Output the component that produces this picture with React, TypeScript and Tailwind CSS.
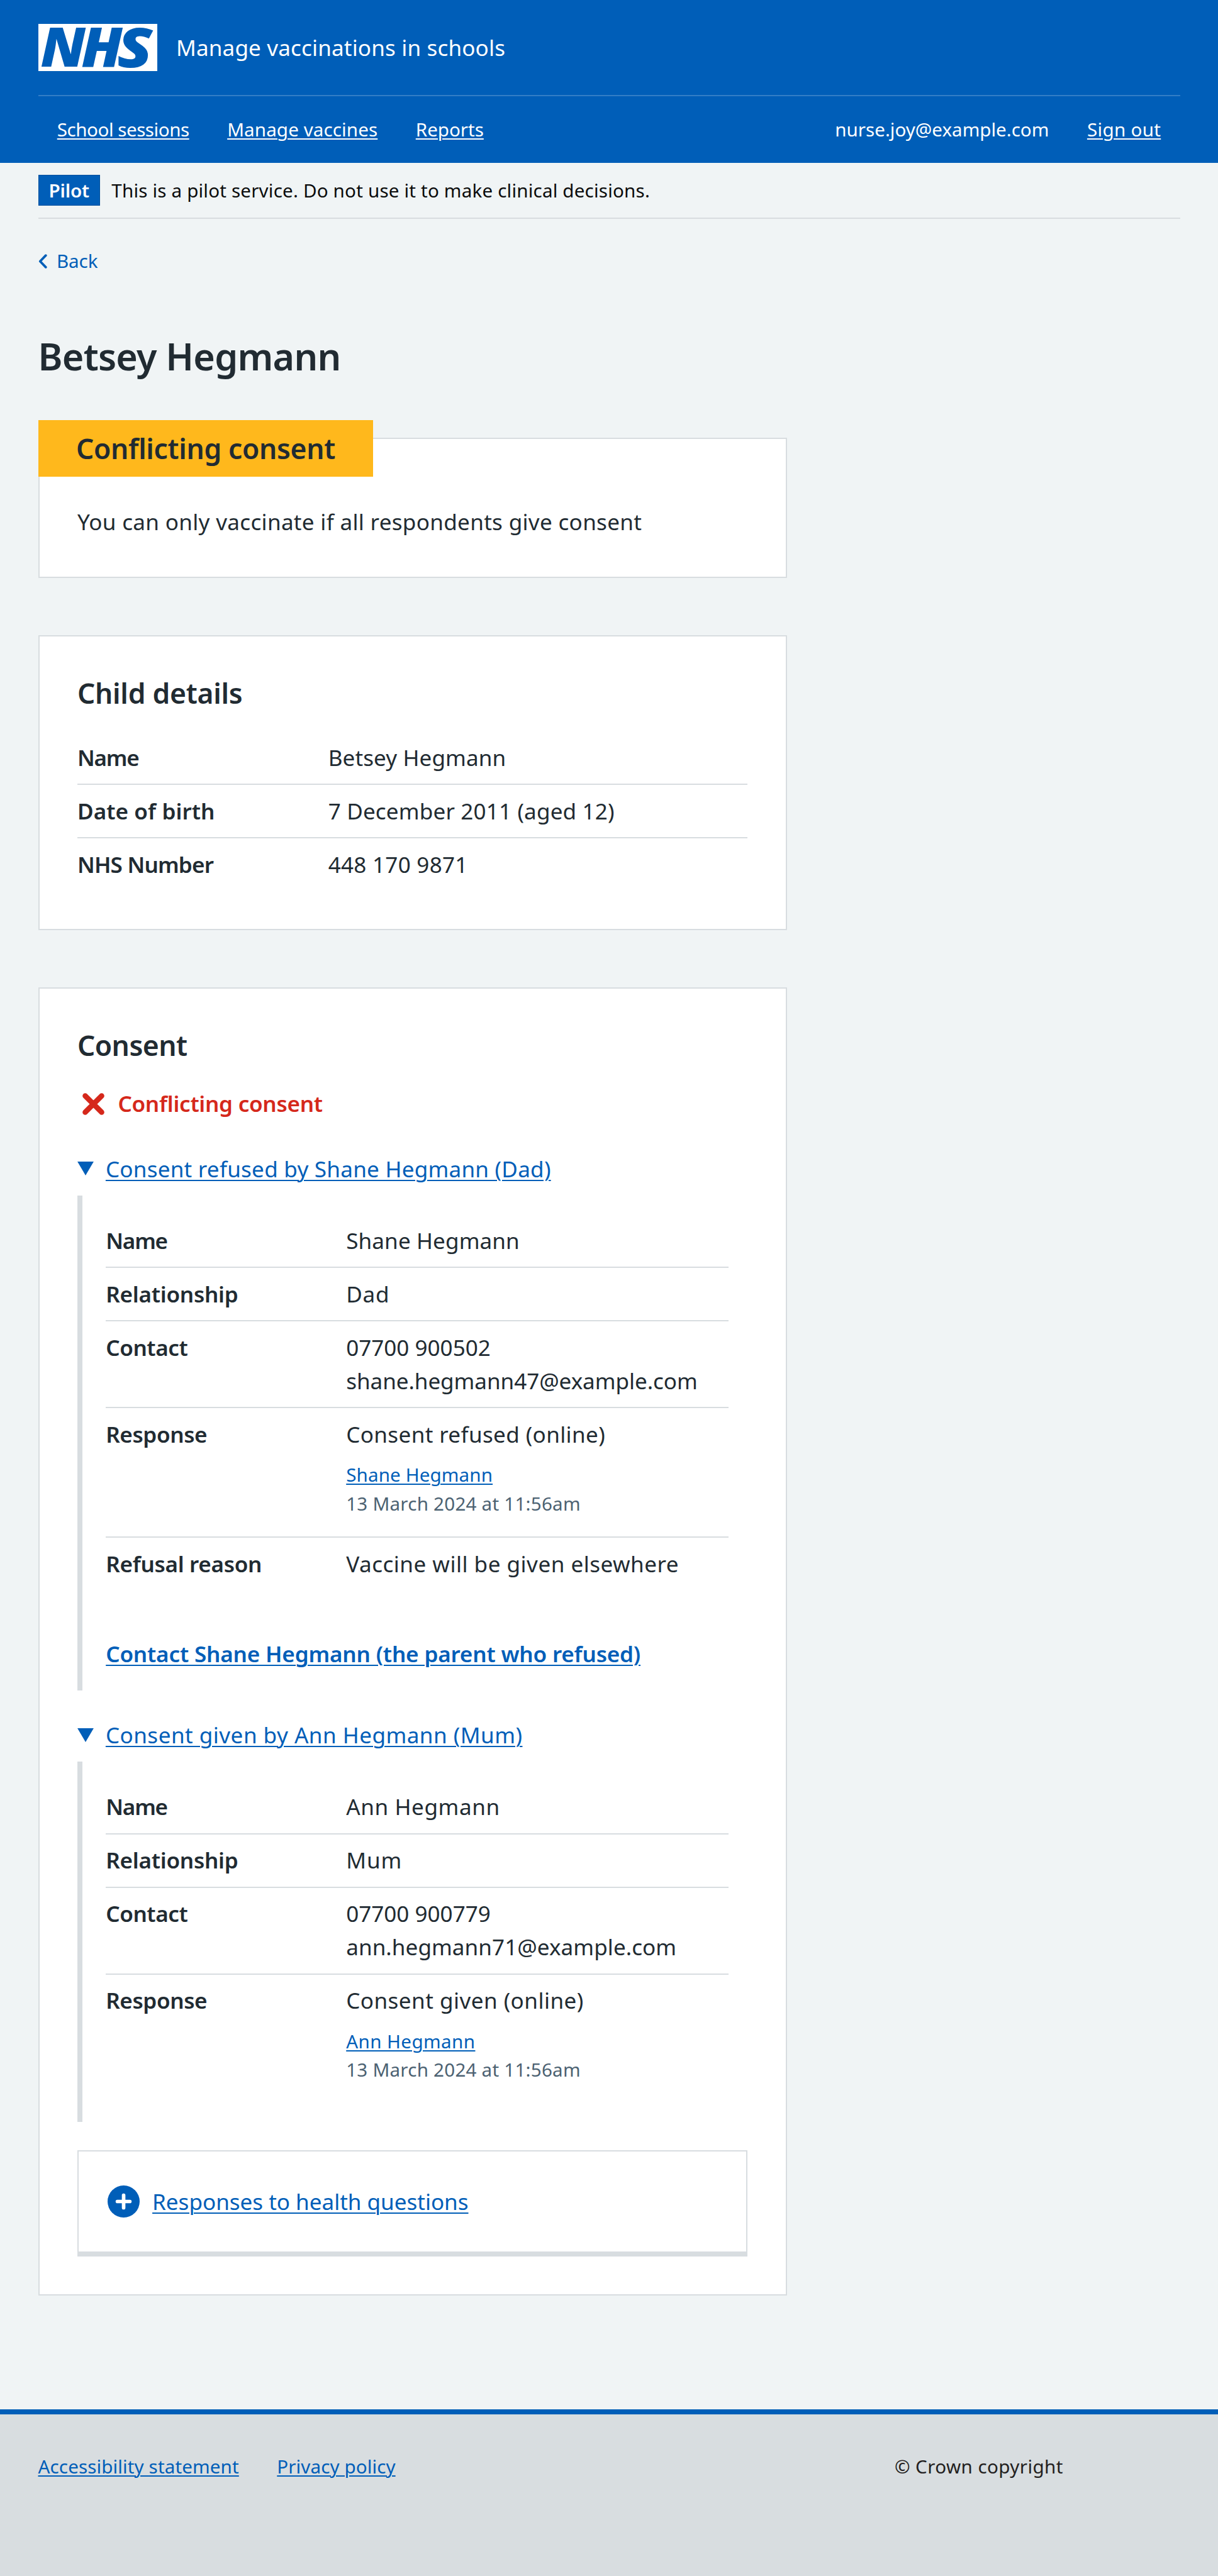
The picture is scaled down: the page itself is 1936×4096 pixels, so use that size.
import React from "react";

type Row = { label: string; labelClass: string; value: React.ReactNode };

const body = "block whitespace-nowrap text-[35.1px] leading-[52.94px]";
const small = "block whitespace-nowrap text-[29.6px] leading-[45.37px]";
const linkLg = "underline decoration-2 underline-offset-4";
const linkSm = "underline decoration-2 underline-offset-[3px]";

function NhsLogo() {
  return (
    <svg
      viewBox="0 0 200 80"
      fill="#005eb8"
      aria-label="NHS"
      className="h-[75.6px] w-[189px] bg-white font-['Open_Sans'] text-[91px] font-extrabold italic"
    >
      <text transform="translate(3.8 72.3) scale(1.052 1)">N</text>
      <text transform="translate(72.1 72.3) scale(1.065 1)">H</text>
      <text transform="translate(132.6 72.5) scale(1.19 1.02)">S</text>
    </svg>
  );
}

function Header() {
  return (
    <header className="h-[259px] bg-[#005eb8] px-[60.5px] text-white">
      <div className="flex h-[151px] items-center gap-[30.5px]">
        <NhsLogo />
        <span className="mb-px whitespace-nowrap text-[35.1px] leading-[53px] tracking-[0.14px]">
          Manage vaccinations in schools
        </span>
      </div>
      <nav className="flex h-[108px] items-center justify-between border-t-2 border-[#337ec6] px-[30.25px] pb-px text-[29.6px] leading-[45px]">
        <div className="flex gap-[60.5px] whitespace-nowrap">
          <a className={`${linkSm} tracking-[-0.48px]`}>School sessions</a>
          <a className={`${linkSm} tracking-[0.09px]`}>Manage vaccines</a>
          <a className={`${linkSm} tracking-[-0.03px]`}>Reports</a>
        </div>
        <div className="flex gap-[60.5px] whitespace-nowrap">
          <span className="tracking-[-0.02px]">nurse.joy@example.com</span>
          <a className={`${linkSm} tracking-[0.3px]`}>Sign out</a>
        </div>
      </nav>
    </header>
  );
}

function PilotBanner() {
  return (
    <div className="mx-[60.5px] flex h-[89px] items-center border-b-2 border-[#d8dde0] whitespace-nowrap text-[29.6px] leading-[45px]">
      <strong className="flex h-[49px] w-[98.3px] items-center justify-center border border-[#004f9c] bg-[#005eb8] font-semibold tracking-[-0.2px] text-white">
        Pilot
      </strong>
      <span className="ml-[18.5px] pb-px tracking-[0.18px] text-[#0b0c0c]">
        This is a pilot service. Do not use it to make clinical decisions.
      </span>
    </div>
  );
}

function SummaryList({ rows, columns }: { rows: Row[]; columns: string }) {
  return (
    <dl>
      {rows.map((row, i) => (
        <div
          key={row.label}
          className={`grid pt-[14.6px] pb-[15.6px] ${columns} ${i < rows.length - 1 ? "border-b-2 border-[#d8dde0]" : ""}`}
        >
          <dt className={`${body} font-semibold ${row.labelClass}`}>{row.label}</dt>
          <dd>{row.value}</dd>
        </div>
      ))}
    </dl>
  );
}

function Details({
  title,
  titleClass,
  className,
  panelClass,
  children,
}: {
  title: string;
  titleClass: string;
  className: string;
  panelClass: string;
  children: React.ReactNode;
}) {
  return (
    <section className={className}>
      <div className="flex items-center text-[#005eb8]">
        <svg viewBox="0 0 27 23" className="mr-[19px] h-[22px] w-[26px]">
          <path d="M0 0H27L13.5 23Z" fill="currentColor" />
        </svg>
        <a className={`${body} ${linkLg} ${titleClass}`}>{title}</a>
      </div>
      <div className={`mt-4 border-l-8 border-[#d8dde0] pt-[30.3px] pr-[30.2px] pl-[37.3px] ${panelClass}`}>
        {children}
      </div>
    </section>
  );
}

function Responder({
  text,
  textClass,
  name,
  nameClass,
}: {
  text: string;
  textClass: string;
  name: string;
  nameClass: string;
}) {
  return (
    <>
      <span className={`${body} ${textClass}`}>{text}</span>
      <a className={`${small} ${linkSm} mt-[15.4px] text-[#005eb8] ${nameClass}`}>{name}</a>
      <span className={`${small} mb-[14.5px] tracking-[0.23px] text-[#4c6272]`}>13 March 2024 at 11:56am</span>
    </>
  );
}

const childRows: Row[] = [
  {
    label: "Name",
    labelClass: "tracking-[-1.2px]",
    value: <span className={`${body} tracking-[0.09px]`}>Betsey Hegmann</span>,
  },
  {
    label: "Date of birth",
    labelClass: "tracking-[0.08px]",
    value: <span className={`${body} tracking-[0.15px]`}>7 December 2011 (aged 12)</span>,
  },
  {
    label: "NHS Number",
    labelClass: "tracking-[-0.81px]",
    value: <span className={`${body} tracking-[0.25px]`}>448 170 9871</span>,
  },
];

const refusedRows: Row[] = [
  {
    label: "Name",
    labelClass: "tracking-[-1.2px]",
    value: <span className={`${body} tracking-[0.1px]`}>Shane Hegmann</span>,
  },
  {
    label: "Relationship",
    labelClass: "tracking-[-0.25px]",
    value: <span className={`${body} tracking-[0.8px]`}>Dad</span>,
  },
  {
    label: "Contact",
    labelClass: "tracking-[-0.41px]",
    value: (
      <>
        <span className={`${body} tracking-[-0.02px]`}>07700 900502</span>
        <span className={`${body} tracking-[-0.07px]`}>shane.hegmann47@example.com</span>
      </>
    ),
  },
  {
    label: "Response",
    labelClass: "tracking-[-0.4px]",
    value: (
      <Responder
        text="Consent refused (online)"
        textClass="tracking-[0.36px]"
        name="Shane Hegmann"
        nameClass="tracking-[0.11px]"
      />
    ),
  },
  {
    label: "Refusal reason",
    labelClass: "tracking-[-0.3px]",
    value: <span className={`${body} tracking-[0.48px]`}>Vaccine will be given elsewhere</span>,
  },
];

const givenRows: Row[] = [
  {
    label: "Name",
    labelClass: "tracking-[-1.2px]",
    value: <span className={`${body} tracking-[0.59px]`}>Ann Hegmann</span>,
  },
  {
    label: "Relationship",
    labelClass: "tracking-[-0.25px]",
    value: <span className={`${body} tracking-[0.9px]`}>Mum</span>,
  },
  {
    label: "Contact",
    labelClass: "tracking-[-0.41px]",
    value: (
      <>
        <span className={`${body} tracking-[-0.02px]`}>07700 900779</span>
        <span className={`${body} tracking-[0.05px]`}>ann.hegmann71@example.com</span>
      </>
    ),
  },
  {
    label: "Response",
    labelClass: "tracking-[-0.4px]",
    value: (
      <Responder
        text="Consent given (online)"
        textClass="tracking-[0.45px]"
        name="Ann Hegmann"
        nameClass="tracking-[0.4px]"
      />
    ),
  },
];

export default function App() {
  return (
    <div className="flex h-[4096px] w-[1936px] flex-col overflow-hidden bg-[#f0f4f5] font-['Noto_Sans',sans-serif] text-[#212b32]">
      <Header />
      <PilotBanner />

      <main className="w-[1250.6px] flex-1 pl-[60.5px]">
        <a className="mt-[49.4px] flex h-9 items-center whitespace-nowrap text-[29.6px] leading-9 tracking-[-0.13px] text-[#005eb8]">
          <svg viewBox="0 0 15 24" className="mr-[15.5px] h-[23px] w-[14px]" fill="none">
            <path d="M12.6 2 3 12l9.6 10" stroke="currentColor" strokeWidth="4" strokeLinecap="round" strokeLinejoin="round" />
          </svg>
          Back
        </a>

        <h1 className="mt-[93px] text-[59.2px] leading-[80px] font-semibold tracking-[-0.75px]">Betsey Hegmann</h1>

        <section className="mt-[89.6px] h-[223px] border-2 border-[#d8dde0] bg-white">
          <h2 className="-mt-[30.3px] -ml-0.5 flex h-[90.7px] w-[532.2px] items-center bg-[#ffb81c] pl-[60.5px] text-[44.4px] font-semibold tracking-[-0.34px] whitespace-nowrap">
            Conflicting consent
          </h2>
          <p className={`${body} mt-[44.4px] pl-[60.4px] tracking-[0.3px]`}>
            You can only vaccinate if all respondents give consent
          </p>
        </section>

        <section className="mt-[90.8px] h-[469px] border-2 border-[#d8dde0] bg-white px-[60.4px] pt-[60.2px]">
          <h2 className="mb-[31.2px] text-[44.4px] leading-[60px] font-semibold tracking-[-0.25px]">Child details</h2>
          <SummaryList rows={childRows} columns="grid-cols-[398.8px_1fr]" />
        </section>

        <section className="mt-[90.8px] h-[2080.2px] border-2 border-[#d8dde0] bg-white px-[60.4px] pt-[60.4px]">
          <h2 className="text-[44.4px] leading-[60px] font-semibold tracking-[-0.51px]">Consent</h2>

          <p className="mt-9 flex items-center text-[#d5281b]">
            <svg viewBox="0 0 37 37" className="mt-0.5 mr-[21px] ml-[8.5px] h-[35px] w-[35px]" fill="none">
              <path d="M4.7 4.7 32.3 32.3M32.3 4.7 4.7 32.3" stroke="currentColor" strokeWidth="9" strokeLinecap="round" />
            </svg>
            <span className={`${body} font-semibold tracking-[-0.27px]`}>Conflicting consent</span>
          </p>

          <Details
            title="Consent refused by Shane Hegmann (Dad)"
            titleClass="tracking-[0.23px]"
            className="mt-[51px]"
            panelClass="h-[786.8px]"
          >
            <SummaryList rows={refusedRows} columns="grid-cols-[382px_1fr]" />
            <a className={`${body} ${linkLg} mt-[74.5px] font-semibold tracking-[-0.18px] text-[#005eb8]`}>
              Contact Shane Hegmann (the parent who refused)
            </a>
          </Details>

          <Details
            title="Consent given by Ann Hegmann (Mum)"
            titleClass="tracking-[0.47px]"
            className="mt-[44.5px]"
            panelClass="h-[572.8px]"
          >
            <SummaryList rows={givenRows} columns="grid-cols-[382px_1fr]" />
          </Details>

          <div className="mt-[45.6px] flex h-[168.3px] items-center border-2 border-b-8 border-[#d8dde0] pb-px pl-[46.4px] text-[#005eb8]">
            <svg viewBox="0 0 54 54" className="mt-px mr-[19.8px] h-[51px] w-[51px]">
              <circle cx="27" cy="27" r="27" fill="currentColor" />
              <path d="M27 16.5v21M16.5 27h21" stroke="#fff" strokeWidth="6" strokeLinecap="round" />
            </svg>
            <a className={`${body} ${linkLg} tracking-[-0.03px]`}>Responses to health questions</a>
          </div>
        </section>
      </main>

      <footer className="flex h-[264.7px] border-t-8 border-[#005eb8] bg-[#d8dde0] pt-[59.6px] pl-[60.5px] whitespace-nowrap text-[29.6px] leading-[45px]">
        <div className="flex w-[1361.5px] gap-[60.5px] text-[#005eb8]">
          <a className={`${linkSm} tracking-[0.11px]`}>Accessibility statement</a>
          <a className={`${linkSm} tracking-[0.09px]`}>Privacy policy</a>
        </div>
        <p className="tracking-[0.4px] text-[#231f20]">© Crown copyright</p>
      </footer>
    </div>
  );
}
